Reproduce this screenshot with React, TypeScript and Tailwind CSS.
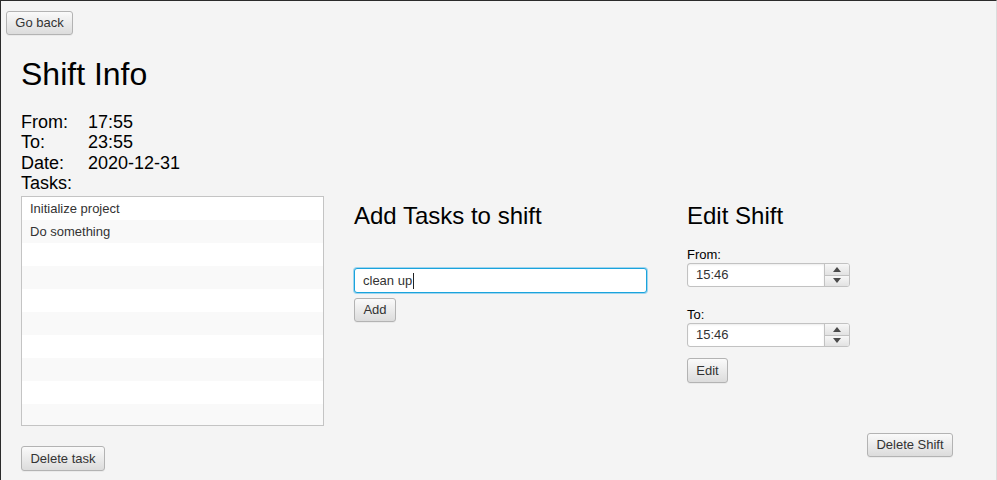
const btn =
  "flex items-center justify-center rounded-[3px] border border-[#b3b3b3] bg-gradient-to-b from-[#fafafa] to-[#dcdcdc] text-[13px] text-[#333] shadow-[0_1px_0_rgba(0,0,0,0.04)]";

function Spinner({ value }: { value: string }) {
  return (
    <div className="flex h-[24px] w-[163px] rounded-[3px] border border-[#c2c2c2] bg-white">
      <div className="flex flex-1 items-center pl-[8px] text-[13px] text-[#333] shadow-[inset_0_1px_2px_rgba(0,0,0,0.08)]">
        {value}
      </div>
      <div className="flex w-[25px] flex-col border-l border-[#c2c2c2]">
        <div className="flex flex-1 items-center justify-center rounded-tr-[2px] bg-gradient-to-b from-[#f7f7f7] to-[#e2e2e2]">
          <div className="h-0 w-0 border-x-[4px] border-b-[5px] border-x-transparent border-b-[#4a4a4a]" />
        </div>
        <div className="h-px bg-[#c2c2c2]" />
        <div className="flex flex-1 items-center justify-center rounded-br-[2px] bg-gradient-to-b from-[#f7f7f7] to-[#e2e2e2]">
          <div className="h-0 w-0 border-x-[4px] border-t-[5px] border-x-transparent border-t-[#4a4a4a]" />
        </div>
      </div>
    </div>
  );
}

export default function App() {
  const tasks = ["Initialize project", "Do something"];
  const rows = Array.from({ length: 10 }, (_, i) => tasks[i] ?? "");

  return (
    <div className="h-[480px] w-[997px] overflow-hidden border-l border-t border-r border-[#2b2b2b] border-r-[#dcdcdc] bg-[#f4f4f4] font-['Liberation_Sans',Arial,sans-serif] text-black">
      <div className="pl-[5px] pt-[10px]">
        <button type="button" className={`${btn} h-[24px] w-[67px]`}>
          Go back
        </button>
      </div>

      <div className="pl-[20px]">
        <h1 className="mt-[21px] text-[32px] leading-[37px]">Shift Info</h1>
        <div className="mt-[19px] grid grid-cols-[67px_auto] text-[18px] leading-[20.3px]">
          <span>From:</span>
          <span>17:55</span>
          <span>To:</span>
          <span>23:55</span>
          <span>Date:</span>
          <span>2020-12-31</span>
          <span>Tasks:</span>
          <span />
        </div>

        <div className="mt-[3px] flex">
          <div className="w-[303px]">
            <div className="h-[230px] overflow-hidden border border-[#c4c4c4] bg-white">
              {rows.map((t, i) => (
                <div
                  key={i}
                  className={`flex h-[23px] items-center pl-[8px] text-[13px] text-[#333] ${
                    i % 2 === 0 ? "bg-white" : "bg-[#f9f9f9]"
                  }`}
                >
                  {t}
                </div>
              ))}
            </div>
            <button type="button" className={`${btn} mt-[20px] h-[25px] w-[84px]`}>
              Delete task
            </button>
          </div>

          <div className="ml-[30px] w-[293px]">
            <h2 className="mt-[6px] text-[24px] leading-[28px]">Add Tasks to shift</h2>
            <div className="mt-[38px] flex h-[25px] items-center rounded-[3px] border border-[#1aa3dc] bg-white pl-[8px] text-[13px] text-[#333] ring-1 ring-[#9fd5ee]">
              clean up<span className="ml-px h-[16px] w-px bg-[#222]" />
            </div>
            <button type="button" className={`${btn} mt-[5px] h-[24px] w-[42px]`}>
              Add
            </button>
          </div>

          <div className="ml-[40px] flex-1">
            <h2 className="mt-[6px] text-[24px] leading-[28px]">Edit Shift</h2>
            <div className="mt-[17px] text-[13px] leading-[16px]">From:</div>
            <Spinner value="15:46" />
            <div className="mt-[20px] text-[13px] leading-[16px]">To:</div>
            <Spinner value="15:46" />
            <button type="button" className={`${btn} mt-[11px] h-[25px] w-[41px]`}>
              Edit
            </button>
            <button type="button" className={`${btn} ml-[180px] mt-[50px] h-[24px] w-[86px]`}>
              Delete Shift
            </button>
          </div>
        </div>
      </div>
    </div>
  );
}
